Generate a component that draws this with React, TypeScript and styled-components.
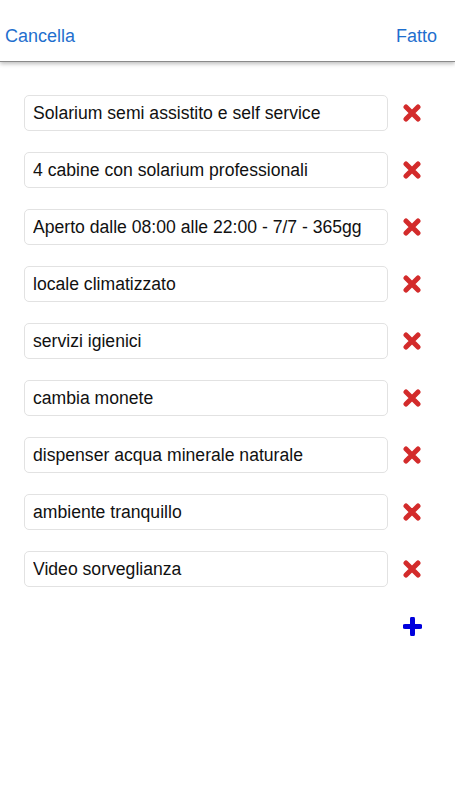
import { createGlobalStyle } from 'styled-components';
import styled from 'styled-components';

const ITEMS = [
  'Solarium semi assistito e self service',
  '4 cabine con solarium professionali',
  'Aperto dalle 08:00 alle 22:00 - 7/7 - 365gg',
  'locale climatizzato',
  'servizi igienici',
  'cambia monete',
  'dispenser acqua minerale naturale',
  'ambiente tranquillo',
  'Video sorveglianza',
];

const GlobalStyle = createGlobalStyle`
  html, body {
    margin: 0;
    padding: 0;
    background: #fff;
  }
  body {
    font-family: 'Liberation Sans', Arial, sans-serif;
  }
`;

// thick "times" glyph, like the old font-awesome one
const RemoveIcon = () => (
  <svg width='18' height='18' viewBox='0 0 18 18'>
    <path
      d='M3 3 L15 15 M15 3 L3 15'
      stroke='currentColor'
      strokeWidth='5'
      strokeLinecap='round'
    />
  </svg>
);

const AddIcon = () => (
  <svg width='19' height='19' viewBox='0 0 19 19'>
    <path
      d='M9.5 2 L9.5 17 M2 9.5 L17 9.5'
      stroke='currentColor'
      strokeWidth='5'
      strokeLinecap='round'
    />
  </svg>
);

const App = () => {
  return (
    <>
      <GlobalStyle />
      <Page>
        <Header>
          <HeaderButton>Cancella</HeaderButton>
          <HeaderButton>Fatto</HeaderButton>
        </Header>
        <List>
          {ITEMS.map(item => (
            <Row key={item}>
              <Field defaultValue={item} />
              <IconButton color='#d32b2b' aria-label='Rimuovi'>
                <RemoveIcon />
              </IconButton>
            </Row>
          ))}
          <Row>
            <Spacer />
            <IconButton color='#0000dd' aria-label='Aggiungi'>
              <AddIcon />
            </IconButton>
          </Row>
        </List>
      </Page>
    </>
  );
};

export default App;

const Page = styled.div`
  width: 455px;
  min-height: 800px;
  background: #fff;
`;

const Header = styled.div`
  height: 62px;
  box-sizing: border-box;
  padding: 0 18px 14px 5px;
  display: flex;
  align-items: flex-end;
  justify-content: space-between;
  border-bottom: 1px solid #8a8a8a;
  box-shadow: 0 2px 4px rgba(0, 0, 0, 0.25);
`;

const HeaderButton = styled.div`
  font-size: 18px;
  color: #1f6fce;
  cursor: pointer;
`;

const List = styled.div`
  padding: 33px 0 0 24px;
  display: flex;
  flex-direction: column;
  gap: 21px;
`;

const Row = styled.div`
  display: flex;
  align-items: center;
  height: 36px;
`;

const Field = styled.input`
  width: 364px;
  height: 36px;
  box-sizing: border-box;
  padding: 0 8px;
  border: 1px solid #e2e2e2;
  border-radius: 5px;
  font-family: 'Liberation Sans', Arial, sans-serif;
  font-size: 17.6px;
  color: #111;
  background: #fff;
  outline: none;
`;

const Spacer = styled.div`
  width: 364px;
`;

const IconButton = styled.div<{ color: string }>`
  width: 48px;
  display: flex;
  justify-content: center;
  align-items: center;
  color: ${({ color }) => color};
  cursor: pointer;
`;
